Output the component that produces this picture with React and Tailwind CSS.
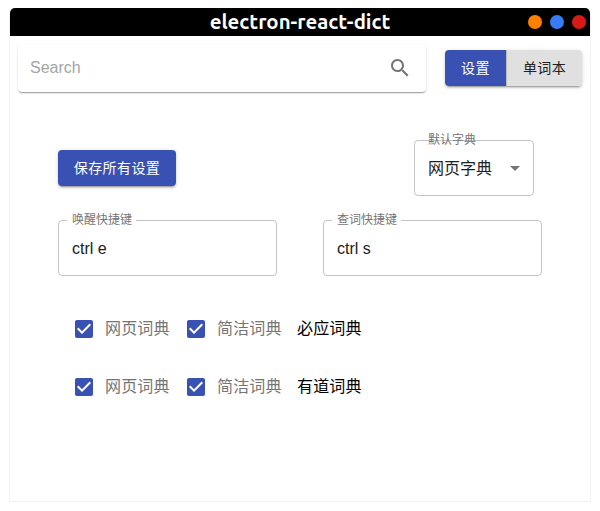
import React from "react";

const RAISED =
  "shadow-[0px_3px_1px_-2px_rgba(0,0,0,0.2),0px_2px_2px_0px_rgba(0,0,0,0.14),0px_1px_5px_0px_rgba(0,0,0,0.12)]";

function Outlined({ label, notched, className, children }) {
  return (
    <div className={`relative flex h-14 items-center rounded border border-[#c4c4c4] px-[13px] ${className}`}>
      <span
        className={`absolute -top-[9px] whitespace-nowrap text-[12px] leading-4 text-[#757575] ${
          notched ? "left-2 bg-white px-[5px] pr-1" : "left-[13px]"
        }`}
      >
        {label}
      </span>
      {children}
    </div>
  );
}

function CheckItem({ label }) {
  return (
    <label className="flex items-center">
      <span className="flex size-[42px] items-center justify-center">
        <svg viewBox="0 0 24 24" className="size-6 fill-[#3951b2]">
          <path d="M19 3H5c-1.11 0-2 .9-2 2v14c0 1.1.89 2 2 2h14c1.11 0 2-.9 2-2V5c0-1.1-.89-2-2-2zm-9 14l-5-5 1.41-1.41L10 14.17l7.59-7.59L19 8l-9 9z" />
        </svg>
      </span>
      <span className="w-16 whitespace-nowrap tracking-[0.15px] text-[#757575]">{label}</span>
    </label>
  );
}

function DictRow({ name }) {
  return (
    <div className="flex h-[42px] items-center">
      <CheckItem label="网页词典" />
      <div className="ml-[6px]">
        <CheckItem label="简洁词典" />
      </div>
      <span className="ml-4 tracking-[0.15px] text-black">{name}</span>
    </div>
  );
}

export default function App() {
  return (
    <div className="h-[511px] w-[600px] overflow-hidden bg-white px-[9px] pt-2 font-['Liberation_Sans','Noto_Sans_CJK_SC',sans-serif] text-[16px] leading-6 text-[#212121]">
      <div className="h-[494px] rounded-t-md border-x border-b border-[#f2f2f2]">
        <header className="grid h-7 grid-cols-[1fr_auto_1fr] items-center rounded-t-[5px] bg-black">
          <h1 className="col-start-2 w-[182px] whitespace-nowrap text-center font-['Ubuntu','Noto_Sans',sans-serif] text-[20.4px] font-bold leading-7 text-white">
            electron-react-dict
          </h1>
          <div className="flex justify-end gap-2 pr-1">
            <span className="size-[14px] rounded-full bg-[#ff8000]" />
            <span className="size-[14px] rounded-full bg-[#377bf5]" />
            <span className="size-[14px] rounded-full bg-[#d71a18]" />
          </div>
        </header>

        <div className="flex items-center justify-between px-2 pt-2">
          <div className="flex h-12 w-[408px] items-center justify-between rounded pl-3 pr-[14px] shadow-[0px_2px_1px_-1px_rgba(0,0,0,0.2),0px_1px_1px_0px_rgba(0,0,0,0.14),0px_1px_3px_0px_rgba(0,0,0,0.12)]">
            <span className="text-[#a5a5a5]">Search</span>
            <svg viewBox="0 0 24 24" className="size-6 fill-[#757575]">
              <path d="M15.5 14h-.79l-.28-.27C15.41 12.59 16 11.11 16 9.5 16 5.91 13.09 3 9.5 3S3 5.91 3 9.5 5.91 16 9.5 16c1.61 0 3.09-.59 4.23-1.57l.27.28v.79l5 4.99L20.49 19l-4.99-5zm-6 0C7.01 14 5 11.99 5 9.5S7.01 5 9.5 5 14 7.01 14 9.5 11.99 14 9.5 14z" />
            </svg>
          </div>
          <div className={`flex h-9 w-[137px] rounded text-[14px] tracking-[0.4px] ${RAISED}`}>
            <button className="w-[62px] rounded-l border-r border-[#bdbdbd] bg-[#3951b2] text-white">设置</button>
            <button className="flex-1 rounded-r bg-[#e0e0e0] text-[#212121]">单词本</button>
          </div>
        </div>

        <main className="px-12 pt-12">
          <div className="flex items-center justify-between pr-2">
            <button className={`h-9 w-[118px] rounded bg-[#3951b2] text-[14px] tracking-[0.4px] text-white ${RAISED}`}>
              保存所有设置
            </button>
            <Outlined label="默认字典" className="w-[120px] justify-between">
              <span className="pt-0.5">网页字典</span>
              <svg viewBox="0 0 24 24" className="-mr-[7px] size-6 fill-[#757575]">
                <path d="M7 10l5 5 5-5z" />
              </svg>
            </Outlined>
          </div>

          <div className="mt-6 flex justify-between">
            <Outlined label="唤醒快捷键" notched className="w-[219px]">
              <span className="pt-0.5">ctrl e</span>
            </Outlined>
            <Outlined label="查词快捷键" notched className="w-[219px]">
              <span className="pt-0.5">ctrl s</span>
            </Outlined>
          </div>

          <div className="mt-8 flex flex-col gap-4 pl-[5px]">
            <DictRow name="必应词典" />
            <DictRow name="有道词典" />
          </div>
        </main>
      </div>
    </div>
  );
}
